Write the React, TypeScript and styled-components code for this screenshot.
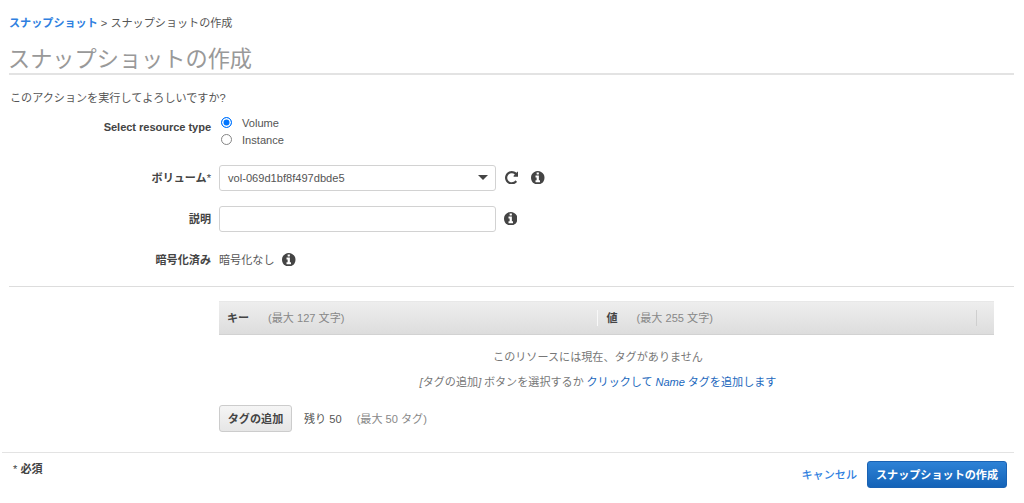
import React from "react";
import styled, { createGlobalStyle } from "styled-components";

const GlobalStyle = createGlobalStyle`
  * { box-sizing: border-box; }
  body {
    margin: 0;
    background: #fff;
    color: #444;
    font: 11.1px/16px "Liberation Sans", "Noto Sans CJK JP", sans-serif;
    overflow: hidden;
  }
`;

const Page = styled.main`
  width: 1024px;
  height: 503px;
  display: flex;
  flex-direction: column;
  white-space: nowrap;
`;

const Content = styled.div`
  padding: 15px 10px 0 9px;
`;

const Breadcrumb = styled.nav`
  height: 17px;
  color: #555;
`;

const Link = styled.a<{ $bold?: boolean; $dark?: boolean }>`
  color: ${(p) => (p.$dark ? "#2268bd" : "#2f80e0")};
  font-weight: ${(p) => (p.$bold ? 700 : p.$dark ? 400 : 500)};
  text-decoration: none;
`;

const Title = styled.h1`
  margin: 10px 0 0;
  height: 33px;
  border-bottom: 2px solid #e3e3e3;
  color: #999;
  font-size: 22.2px;
  font-weight: 400;
  line-height: 35px;
  text-indent: -1px;
`;

const Question = styled.p`
  margin: 15px 0 0;
  padding-left: 1px;
  color: #555;
`;

const Form = styled.form`
  padding-top: 8px;
  height: 181px;
  border-bottom: 1px solid #ddd;
`;

const Field = styled.div<{ $height: number }>`
  display: grid;
  grid-template-columns: 202px 1fr;
  column-gap: 8px;
  align-items: center;
  height: ${(p) => p.$height}px;
`;

const RadioField = styled(Field)`
  align-items: start;
`;

const Label = styled.label`
  text-align: right;
  font-weight: 700;
  color: #444;
`;

const RadioLabel = styled(Label)`
  padding-top: 5px;
  letter-spacing: -0.06px;
`;

const Asterisk = styled.span`
  font-weight: 400;
`;

const Control = styled.div`
  display: flex;
  align-items: center;
  color: #555;
`;

const Radios = styled.div`
  display: flex;
  flex-direction: column;
`;

const RadioRow = styled.label`
  display: flex;
  align-items: center;
  height: 17.5px;
  gap: 10px;
  color: #555;
`;

const RadioDot = styled.span<{ $on?: boolean }>`
  width: 11px;
  height: 11px;
  margin: -1px 0 0 2px;
  border: 1px solid ${(p) => (p.$on ? "#0075ff" : "#858585")};
  border-radius: 50%;
  background: ${(p) => (p.$on ? "#0075ff" : "#fff")};
  box-shadow: inset 0 0 0 ${(p) => (p.$on ? "1.5px" : "0")} #fff;
`;

const InputBox = styled.div`
  display: flex;
  align-items: center;
  justify-content: space-between;
  width: 277px;
  height: 26px;
  padding: 0 7px 0 8px;
  border: 1px solid #d2d2d2;
  border-radius: 3px;
  background: #fff;
`;

const Caret = styled.span`
  border: 5px solid transparent;
  border-top-color: #444;
  border-bottom: 0;
`;

const Icon = styled.svg<{ $gap: number }>`
  width: 13.5px;
  height: 13.5px;
  margin-left: ${(p) => p.$gap}px;
  fill: #444;
  flex: none;
`;

const Tags = styled.section`
  padding-left: 210px;
  padding-top: 14px;
  width: 985px;
`;

const TagHeader = styled.div`
  display: flex;
  align-items: center;
  height: 34px;
  padding-left: 8px;
  background: linear-gradient(#eee, #ddd);
  border-top: 1px solid #e8e8e8;
  border-bottom: 1px solid #d2d2d2;
`;

const Column = styled.div<{ $width: number; $inset?: number }>`
  display: flex;
  width: ${(p) => p.$width}px;
  padding-left: ${(p) => p.$inset ?? 0}px;
`;

const Divider = styled.span<{ $light?: boolean }>`
  width: 1px;
  height: 16px;
  background: ${(p) => (p.$light ? "#f8f8f8" : "#cfcfcf")};
`;

const ColumnName = styled.b`
  width: 41px;
  color: #444;
`;

const ValueName = styled(ColumnName)`
  width: 30px;
`;

const Hint = styled.span`
  color: #888;
`;

const Empty = styled.div`
  width: 758px;
  padding-top: 14px;
  text-align: center;
  color: #777;
`;

const EmptyLine = styled.p`
  margin: 0 0 9px;
`;

const TagHint = styled(EmptyLine)`
  word-spacing: -0.4px;
`;

const TagActions = styled.div`
  display: flex;
  align-items: center;
  margin-top: 15px;
  color: #555;
`;

const AddButton = styled.button`
  width: 73px;
  height: 27px;
  padding: 0;
  border: 1px solid #ccc;
  border-radius: 3px;
  background: linear-gradient(#f5f5f5, #e6e6e6);
  color: #444;
  font: inherit;
  font-weight: 700;
`;

const Remaining = styled.span`
  margin: 0 15px 0 12px;
`;

const Footer = styled.footer`
  display: flex;
  justify-content: space-between;
  margin: 20px 10px 0 2px;
  padding: 8px 7px 0 11px;
  border-top: 1px solid #e3e3e3;
`;

const Required = styled.span`
  font-weight: 700;
`;

const Actions = styled.div`
  display: flex;
  align-items: center;
  gap: 10px;
`;

const SubmitButton = styled.button`
  width: 140px;
  height: 27px;
  padding: 0;
  border: 1px solid #1a62b3;
  border-radius: 3px;
  background: linear-gradient(#2e82d6, #1463b8);
  color: #fff;
  font: inherit;
  font-weight: 700;
`;

const InfoIcon = ({ gap }: { gap: number }) => (
  <Icon $gap={gap} viewBox="128 128 1536 1536">
    <path d="M1152 1376v-160q0-14-9-23t-23-9h-96v-512q0-14-9-23t-23-9h-320q-14 0-23 9t-9 23v160q0 14 9 23t23 9h96v320h-96q-14 0-23 9t-9 23v160q0 14 9 23t23 9h448q14 0 23-9t9-23zm-128-896v-160q0-14-9-23t-23-9h-192q-14 0-23 9t-9 23v160q0 14 9 23t23 9h192q14 0 23-9t9-23zm640 416q0 209-103 385.5t-279.5 279.5-385.5 103-385.5-103-279.5-279.5-103-385.5 103-385.5 279.5-279.5 385.5-103 385.5 103 279.5 279.5 103 385.5z" />
  </Icon>
);

const RefreshIcon = ({ gap }: { gap: number }) => (
  <Icon $gap={gap} viewBox="128 128 1536 1536">
    <path d="M1664 256v448q0 26-19 45t-45 19h-448q-42 0-59-40-17-39 14-69l138-138q-148-137-349-137-104 0-198.5 40.5t-163.5 109.5-109.5 163.5-40.5 198.5 40.5 198.5 109.5 163.5 163.5 109.5 198.5 40.5q119 0 225-52t179-147q7-10 23-12 15 0 25 9l137 138q9 8 9.5 20.5t-7.5 22.5q-109 132-264 204.5t-327 72.5q-156 0-298-61t-245-164-164-245-61-298 61-298 164-245 245-164 298-61q147 0 284.5 55.5t244.5 156.5l130-129q29-31 70-14 39 17 39 59z" />
  </Icon>
);

export default function App() {
  return (
    <Page>
      <GlobalStyle />
      <Content>
        <Breadcrumb>
          <Link $bold>スナップショット</Link> &gt; スナップショットの作成
        </Breadcrumb>
        <Title>スナップショットの作成</Title>
        <Question>このアクションを実行してよろしいですか?</Question>
        <Form>
          <RadioField $height={43}>
            <RadioLabel>Select resource type</RadioLabel>
            <Radios>
              <RadioRow>
                <RadioDot $on />
                Volume
              </RadioRow>
              <RadioRow>
                <RadioDot />
                Instance
              </RadioRow>
            </Radios>
          </RadioField>
          <Field $height={41}>
            <Label>
              ボリューム<Asterisk>*</Asterisk>
            </Label>
            <Control>
              <InputBox>
                vol-069d1bf8f497dbde5
                <Caret />
              </InputBox>
              <RefreshIcon gap={8.5} />
              <InfoIcon gap={13} />
            </Control>
          </Field>
          <Field $height={41}>
            <Label>説明</Label>
            <Control>
              <InputBox />
              <InfoIcon gap={7.5} />
            </Control>
          </Field>
          <Field $height={41}>
            <Label>暗号化済み</Label>
            <Control>
              暗号化なし
              <InfoIcon gap={8} />
            </Control>
          </Field>
        </Form>
        <Tags>
          <TagHeader>
            <Column $width={370}>
              <ColumnName>キー</ColumnName>
              <Hint>(最大 127 文字)</Hint>
            </Column>
            <Divider $light />
            <Column $width={378} $inset={8.5}>
              <ValueName>値</ValueName>
              <Hint>(最大 255 文字)</Hint>
            </Column>
            <Divider />
          </TagHeader>
          <Empty>
            <EmptyLine>このリソースには現在、タグがありません</EmptyLine>
            <TagHint>
              <i>[</i>タグの追加<i>]</i> ボタンを選択するか{" "}
              <Link $dark>
                クリックして <i>Name</i> タグを追加します
              </Link>
            </TagHint>
          </Empty>
          <TagActions>
            <AddButton type="button">タグの追加</AddButton>
            <Remaining>残り 50</Remaining>
            <Hint>(最大 50 タグ)</Hint>
          </TagActions>
        </Tags>
      </Content>
      <Footer>
        <Required>
          <Asterisk>*</Asterisk> 必須
        </Required>
        <Actions>
          <Link>キャンセル</Link>
          <SubmitButton type="button">スナップショットの作成</SubmitButton>
        </Actions>
      </Footer>
    </Page>
  );
}
